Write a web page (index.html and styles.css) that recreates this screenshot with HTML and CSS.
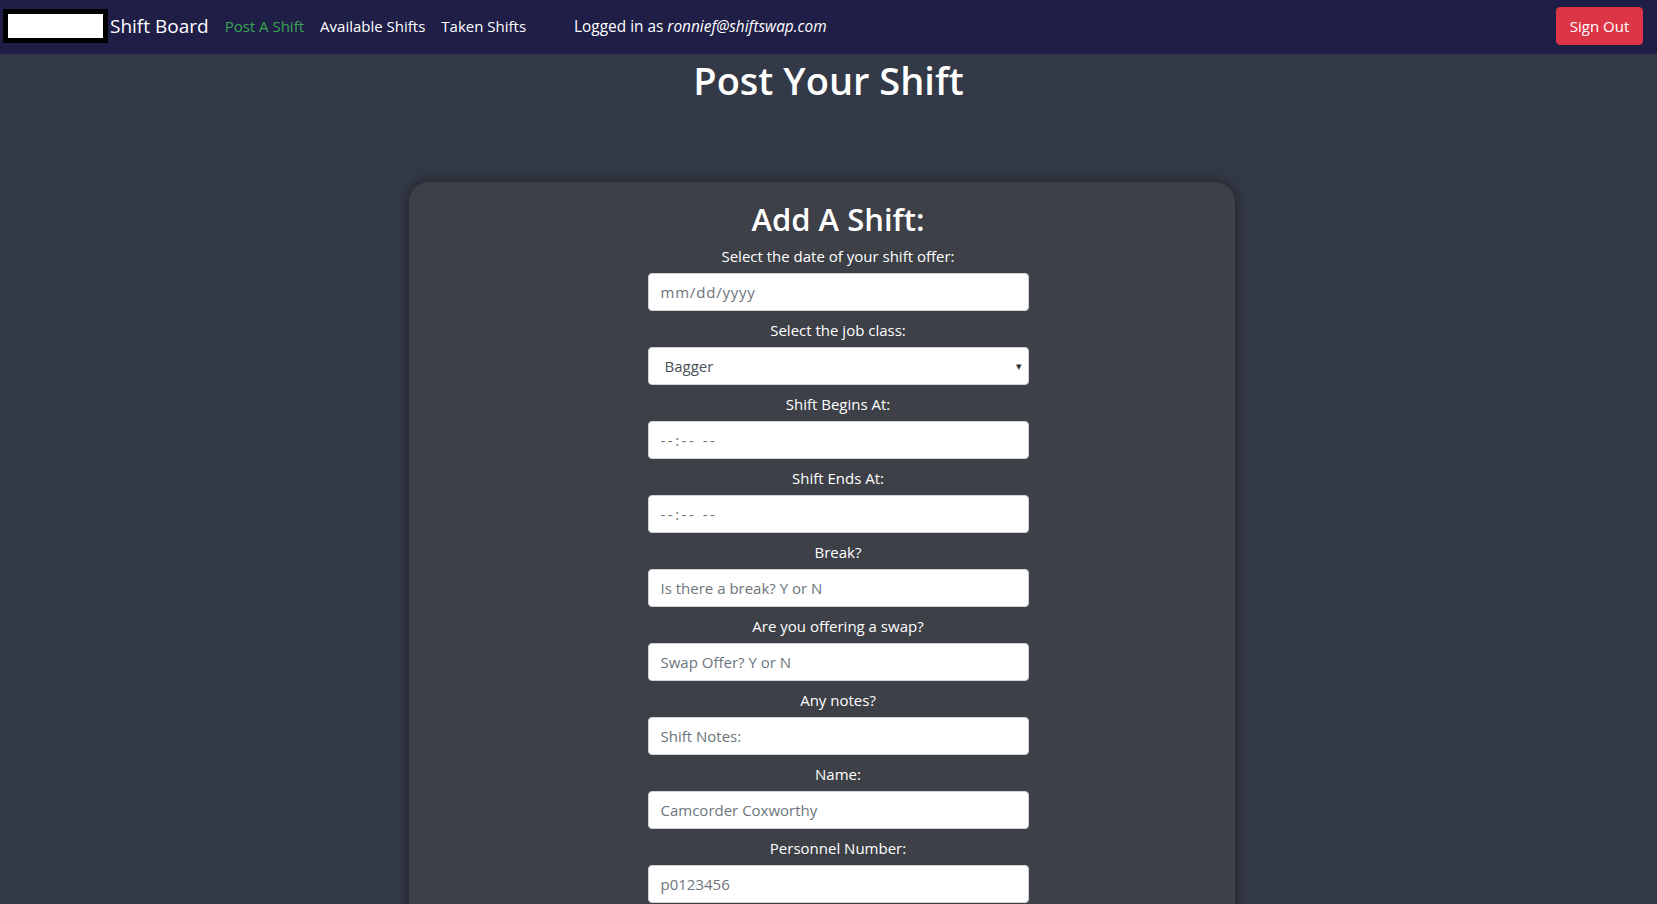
FILE: index.html
```html
<!DOCTYPE html>
<html lang="en">
<head>
<meta charset="utf-8">
<title>Shift Board - Post A Shift</title>
<link rel="stylesheet" href="styles.css">
</head>
<body>
<nav class="navbar">
  <div class="logo"></div>
  <a class="brand" href="#">Shift Board</a>
  <ul class="nav-links">
    <li><a class="nav-link active" href="#">Post A Shift</a></li>
    <li><a class="nav-link" href="#">Available Shifts</a></li>
    <li><a class="nav-link" href="#">Taken Shifts</a></li>
  </ul>
  <span class="logged-in">Logged in as <em>ronnief@shiftswap.com</em></span>
  <button class="btn-signout" type="button">Sign Out</button>
</nav>

<main class="page">
  <h1 class="page-title">Post Your Shift</h1>
  <div class="card-wrap">
    <section class="card">
      <h2 class="card-title">Add A Shift:</h2>
      <form class="shift-form">
        <div class="field">
          <label>Select the date of your shift offer:</label>
          <input class="control control-date" type="text" placeholder="mm/dd/yyyy">
        </div>
        <div class="field">
          <label>Select the job class:</label>
          <div class="select">
            <span class="select-value">Bagger</span>
            <span class="select-arrow">&#9662;</span>
          </div>
        </div>
        <div class="field">
          <label>Shift Begins At:</label>
          <input class="control control-time" type="text" placeholder="--:-- --">
        </div>
        <div class="field">
          <label>Shift Ends At:</label>
          <input class="control control-time" type="text" placeholder="--:-- --">
        </div>
        <div class="field">
          <label>Break?</label>
          <input class="control" type="text" placeholder="Is there a break? Y or N">
        </div>
        <div class="field">
          <label>Are you offering a swap?</label>
          <input class="control" type="text" placeholder="Swap Offer? Y or N">
        </div>
        <div class="field">
          <label>Any notes?</label>
          <input class="control" type="text" placeholder="Shift Notes:">
        </div>
        <div class="field">
          <label>Name:</label>
          <input class="control" type="text" placeholder="Camcorder Coxworthy">
        </div>
        <div class="field">
          <label>Personnel Number:</label>
          <input class="control" type="text" placeholder="p0123456">
        </div>
      </form>
    </section>
  </div>
</main>
</body>
</html>
```

FILE: styles.css
```css
* { box-sizing: border-box; }

html, body {
  margin: 0;
  padding: 0;
}

body {
  background: #333946;
  color: #ffffff;
  font-family: "Open Sans", "Noto Sans", "Liberation Sans", sans-serif;
  font-size: 16px;
  line-height: 1.5;
}

/* ---------- navbar ---------- */
.navbar {
  height: 54px;
  display: flex;
  align-items: center;
  padding: 0 14px 2px 3px;
  background: #1f1e47;
}

.logo {
  width: 105px;
  height: 34px;
  background: #ffffff;
  border: 5px solid #000000;
}

.brand {
  margin-left: 2px;
  color: #ffffff;
  font-size: 19px;
  text-decoration: none;
  line-height: 1.5;
}

.nav-links {
  display: flex;
  gap: 16px;
  list-style: none;
  margin: 0 0 0 16px;
  padding: 0;
}

.nav-link {
  color: #ffffff;
  text-decoration: none;
  font-size: 15px;
}

.nav-link.active {
  color: #3ba552;
}

.logged-in {
  margin-left: 48px;
  padding-top: 2px;
  font-size: 15.4px;
  color: #ffffff;
}

.logged-in em {
  font-style: italic;
}

.btn-signout {
  margin-left: auto;
  background: #dc3545;
  color: #ffffff;
  border: 1px solid #dc3545;
  border-radius: 4px;
  font-family: inherit;
  font-size: 15px;
  line-height: 24px;
  padding: 6px 12px;
  width: 87px;
}

/* ---------- page ---------- */
.page-title {
  margin: 2px 0 0;
  text-align: center;
  font-size: 38px;
  font-weight: 600;
  line-height: 48px;
}

.card-wrap {
  display: flex;
  justify-content: center;
  padding-right: 13px;
  margin-top: 78px;
}

.card {
  width: 826px;
  background: #3d4047;
  border-radius: 20px;
  box-shadow: 0 0 14px rgba(0, 0, 0, 0.45);
  padding: 18px 16px 40px 48px;
}

.card-title {
  margin: 0 0 6px;
  text-align: center;
  font-size: 31px;
  font-weight: 600;
  line-height: 38px;
}

.shift-form {
  display: flex;
  flex-direction: column;
  align-items: center;
}

.field {
  display: flex;
  flex-direction: column;
  align-items: center;
  margin-bottom: 7px;
}

.field label {
  font-size: 15px;
  line-height: 24px;
  margin-bottom: 5px;
}

.control,
.select {
  width: 381px;
  height: 38px;
  border: 1px solid #ced4da;
  border-radius: 4px;
  background: #ffffff;
  font-family: inherit;
  font-size: 15px;
  color: #495057;
  padding: 6px 12px;
}

.control::placeholder {
  color: #6c757d;
  opacity: 1;
}

.control-date::placeholder {
  letter-spacing: 0.8px;
}

.control-time::placeholder {
  letter-spacing: 2.5px;
}

.select {
  display: flex;
  align-items: center;
  justify-content: space-between;
  padding: 6px 6px 6px 16px;
}

.select-value {
  color: #495057;
}

.select-arrow {
  font-size: 11px;
  color: #333333;
}
```
